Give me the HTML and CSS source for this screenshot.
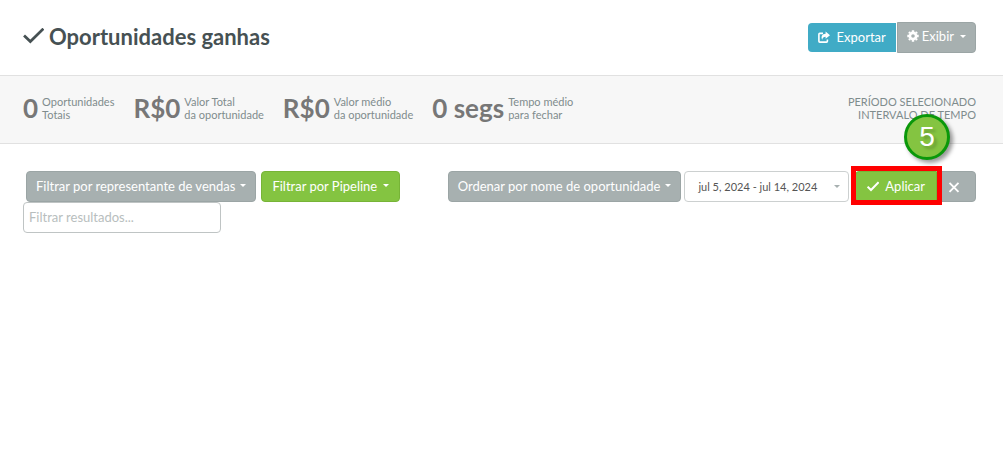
FILE: index.html
```
<!DOCTYPE html>
<html lang="pt-BR">
<head>
  <meta charset="UTF-8">
  <meta name="viewport" content="width=device-width, initial-scale=1.0">
  <title>Oportunidades ganhas</title>
  <link rel="stylesheet" href="styles.css">
</head>
<body>
  <header class="page-header">
    <h1>
      <svg class="title-icon" viewBox="0 0 20 16" aria-hidden="true"><path d="M1 7 L7 12.8 L19.4 0.6" fill="none" stroke="currentColor" stroke-width="2.6"/></svg>
      Oportunidades ganhas
    </h1>
    <div class="header-actions">
      <button type="button" class="btn btn-export">
        <svg class="icon" viewBox="0 0 12 12" aria-hidden="true"><path d="M5 2.4H1.8Q0.9 2.4 0.9 3.3V10.2Q0.9 11.1 1.8 11.1H8.5Q9.4 11.1 9.4 10.2V8.4" fill="none" stroke="currentColor" stroke-width="1.6"/><path d="M7.6 0.6L12 4.2L7.6 7.8V5.7C5.6 5.7 4.6 6.6 4.2 8.8C2.6 5.4 4.4 2.9 7.6 2.8Z" fill="currentColor"/></svg>
        Exportar
      </button>
      <button type="button" class="btn btn-gray btn-view">
        <svg class="icon" viewBox="0 0 12 12" aria-hidden="true"><g fill="none" stroke="currentColor"><circle cx="6" cy="6" r="3.1" stroke-width="2.6"/><path d="M6 0.3V2M6 10V11.7M0.3 6H2M10 6H11.7M2 2L3.1 3.1M8.9 8.9L10 10M2 10L3.1 8.9M8.9 3.1L10 2" stroke-width="2.4"/></g></svg>
        Exibir
        <span class="caret"></span>
      </button>
    </div>
  </header>

  <section class="stats">
    <div class="stat"><strong>0</strong><span>Oportunidades<br>Totais</span></div>
    <div class="stat"><strong>R$0</strong><span>Valor Total<br>da oportunidade</span></div>
    <div class="stat"><strong>R$0</strong><span>Valor médio<br>da oportunidade</span></div>
    <div class="stat"><strong>0 segs</strong><span>Tempo médio<br>para fechar</span></div>
    <p class="period">PERÍODO SELECIONADO<br>INTERVALO DE TEMPO</p>
  </section>

  <main class="filters">
    <div class="toolbar">
      <div class="filter-group">
        <button type="button" class="btn btn-gray btn-wide">Filtrar por representante de vendas <span class="caret"></span></button>
        <button type="button" class="btn btn-green">Filtrar por Pipeline <span class="caret"></span></button>
      </div>
      <div class="sort-group">
        <button type="button" class="btn btn-gray btn-wide">Ordenar por nome de oportunidade <span class="caret"></span></button>
        <button type="button" class="btn btn-date">jul 5, 2024 - jul 14, 2024 <span class="caret"></span></button>
        <div class="apply-group">
          <button type="button" class="btn btn-green btn-apply">
            <svg class="icon" viewBox="0 0 12 12" aria-hidden="true"><path d="M0.6 6.6L4 10L11.6 2.2" fill="none" stroke="currentColor" stroke-width="2"/></svg>
            Aplicar
          </button>
          <button type="button" class="btn btn-gray btn-clear" aria-label="Limpar">
            <svg class="icon" viewBox="0 0 12 12" aria-hidden="true"><path d="M1.5 1.9L10.5 10.9M10.5 1.9L1.5 10.9" fill="none" stroke="currentColor" stroke-width="1.9"/></svg>
          </button>
          <span class="step-frame"></span>
          <span class="step-badge">5</span>
        </div>
      </div>
    </div>
    <input type="text" class="search" placeholder="Filtrar resultados..." aria-label="Filtrar resultados">
  </main>
</body>
</html>
```
FILE: styles.css
```
* {
  box-sizing: border-box;
}

body {
  margin: 0;
  background: #fff;
  color: #777;
  font-family: Lato, "Liberation Sans", sans-serif;
  font-size: 13px;
  line-height: 20px;
}

.page-header {
  display: flex;
  justify-content: space-between;
  align-items: center;
  padding: 22px 27px 22px 23px;
}

h1 {
  display: flex;
  align-items: center;
  gap: 5px;
  margin: 0;
  padding-bottom: 2px;
  color: #465153;
  font-size: 22px;
  font-weight: 700;
  line-height: 29px;
}

.title-icon {
  width: 21px;
  height: 17px;
}

.header-actions {
  display: flex;
  align-items: center;
}

.btn {
  display: flex;
  align-items: center;
  justify-content: center;
  gap: 6px;
  height: 31px;
  padding: 0 10px 2px;
  border: 1px solid transparent;
  border-radius: 4px;
  color: #fff;
  font: inherit;
  white-space: nowrap;
  cursor: pointer;
}

.btn-gray {
  background: #a7b0b0;
  border-color: #9ba5a5;
}

.btn-green {
  background: #84c441;
  border-color: #77b437;
}

.btn-wide {
  gap: 5px;
  padding: 0 9px 2px;
}

.btn-export {
  height: 29px;
  gap: 7px;
  padding: 0 9px 2px;
  background: #40abc6;
  border-radius: 4px 0 0 4px;
}

.btn-view {
  gap: 3px;
  padding: 0 9px 3px;
  margin-left: 1px;
  border-radius: 0 4px 4px 0;
}

.btn-view .caret {
  margin-left: 3px;
}

.icon {
  width: 12px;
  height: 12px;
}

.caret {
  border-top: 3px solid currentColor;
  border-left: 3px solid transparent;
  border-right: 3px solid transparent;
}

.stats {
  display: flex;
  align-items: center;
  gap: 19px;
  height: 69px;
  padding: 0 27px 3px 23px;
  background: #f7f7f7;
  border-top: 1px solid #e1e1e1;
  border-bottom: 1px solid #e1e1e1;
}

.stat {
  display: flex;
  align-items: center;
  gap: 4px;
}

.stat strong {
  font-size: 26px;
  line-height: 34px;
}

.stat span,
.period {
  color: #7f8c8d;
  font-size: 11px;
  line-height: 13px;
}

.period {
  margin: 0 0 0 auto;
  text-align: right;
}

.filters {
  padding: 27px 27px 27px 23px;
}

.toolbar {
  display: flex;
  justify-content: space-between;
  padding-left: 3px;
}

.filter-group {
  display: flex;
  gap: 5px;
}

.sort-group {
  display: flex;
  gap: 3px;
}

.btn-date {
  gap: 17px;
  padding: 0 8px 0 13px;
  background: #fff;
  border-color: #ccd0d0;
  color: #555;
  font-size: 11px;
}

.btn-date .caret {
  color: #a7b0b0;
}

.apply-group {
  display: flex;
  position: relative;
  margin-left: 3px;
}

.btn-apply {
  padding: 0 11px 2px;
  border-radius: 4px 0 0 4px;
}

.btn-clear {
  padding: 0 15px 0 10px;
  border-radius: 0 4px 4px 0;
}

/* step marker drawn over the apply button */
.step-frame {
  position: absolute;
  top: -5px;
  left: -4px;
  right: 34px;
  bottom: -3px;
  border: 5px solid #f00;
  pointer-events: none;
}

.step-badge {
  position: absolute;
  top: -57px;
  right: 26px;
  width: 46px;
  height: 46px;
  border: 3px solid #0a980a;
  border-radius: 50%;
  background: #84c441;
  box-shadow: 3px 3px 4px rgba(0, 0, 0, 0.4);
  color: #fff;
  font-family: "Liberation Sans", sans-serif;
  font-size: 28px;
  line-height: 40px;
  text-align: center;
  text-shadow: 3px 3px 3px rgba(0, 0, 0, 0.2);
}

.search {
  display: block;
  width: 198px;
  height: 31px;
  padding: 0 5px 2px;
  border: 1px solid #bfc4c4;
  border-radius: 4px;
  font: inherit;
}

.search::placeholder {
  color: #b8bebe;
}
```
